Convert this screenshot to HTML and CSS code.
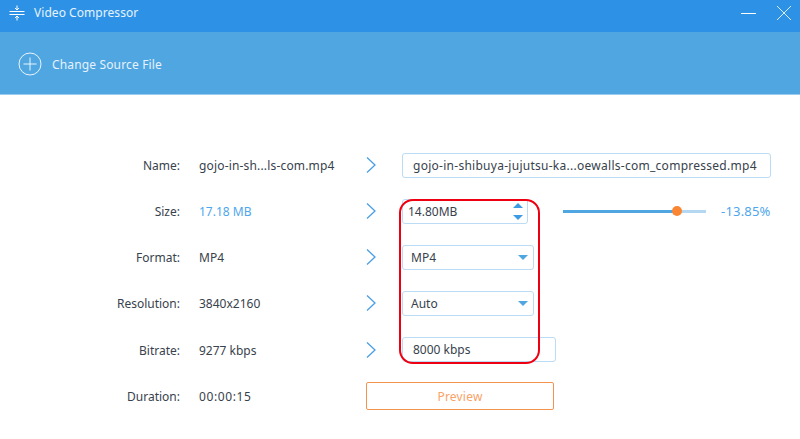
FILE: index.html
```html
<!DOCTYPE html>
<html lang="en">
<head>
  <meta charset="UTF-8">
  <meta name="viewport" content="width=device-width, initial-scale=1.0">
  <title>Video Compressor</title>
  <link rel="stylesheet" href="styles.css">
</head>
<body>
  <div class="titlebar">
    <svg class="app-icon" width="16" height="16" viewBox="0 0 16 16" fill="none" stroke="#fff" stroke-width="1">
      <path d="M0.5 6.5H15.5M0.5 9.5H15.5"/>
      <path d="M8 0.5V4.5M6 3L8 5L10 3"/>
      <path d="M8 15.5V11.5M6 13L8 11L10 13"/>
    </svg>
    <span class="title">Video Compressor</span>
    <div class="window-btns">
      <svg width="16" height="16" viewBox="0 0 16 16" stroke="#fff" stroke-width="1"><path d="M0 8.5H15"/></svg>
      <svg width="16" height="16" viewBox="0 0 16 16" stroke="#d8ecfb" stroke-width="1"><path d="M1 1L15 15M15 1L1 15"/></svg>
    </div>
  </div>

  <div class="toolbar">
    <svg width="24" height="24" viewBox="0 0 24 24" fill="none" stroke="#eaf5fd" stroke-width="1">
      <circle cx="12" cy="12" r="11"/>
      <path d="M12 5.5V18.5M5.5 12H18.5"/>
    </svg>
    <span class="change-source">Change Source File</span>
  </div>

  <div class="main">
    <div class="row">
      <div class="label">Name:</div>
      <div class="value value-name">gojo-in-sh...ls-com.mp4</div>
      <svg class="chevron" width="10" height="16" viewBox="0 0 10 16" fill="none"><path d="M1 0.5L9 8L1 15.5"/></svg>
      <div class="field field-name">gojo-in-shibuya-jujutsu-ka...oewalls-com_compressed.mp4</div>
    </div>
    <div class="row">
      <div class="label">Size:</div>
      <div class="value value-blue">17.18 MB</div>
      <svg class="chevron" width="10" height="16" viewBox="0 0 10 16" fill="none"><path d="M1 0.5L9 8L1 15.5"/></svg>
      <div class="field field-size">
        <span>14.80MB</span>
        <div class="spinner">
          <span class="arrow-up"></span>
          <span class="arrow-down"></span>
        </div>
      </div>
      <div class="slider">
        <div class="slider-fill"></div>
        <div class="slider-thumb"></div>
      </div>
      <div class="percent">-13.85%</div>
    </div>
    <div class="row">
      <div class="label">Format:</div>
      <div class="value">MP4</div>
      <svg class="chevron" width="10" height="16" viewBox="0 0 10 16" fill="none"><path d="M1 0.5L9 8L1 15.5"/></svg>
      <div class="field field-select">
        <span>MP4</span>
        <span class="arrow-down"></span>
      </div>
    </div>
    <div class="row">
      <div class="label">Resolution:</div>
      <div class="value">3840x2160</div>
      <svg class="chevron" width="10" height="16" viewBox="0 0 10 16" fill="none"><path d="M1 0.5L9 8L1 15.5"/></svg>
      <div class="field field-select">
        <span>Auto</span>
        <span class="arrow-down"></span>
      </div>
    </div>
    <div class="row row-low">
      <div class="label">Bitrate:</div>
      <div class="value">9277 kbps</div>
      <svg class="chevron" width="10" height="16" viewBox="0 0 10 16" fill="none"><path d="M1 0.5L9 8L1 15.5"/></svg>
      <div class="field field-bitrate">8000 kbps</div>
    </div>
    <div class="row">
      <div class="label">Duration:</div>
      <div class="value value-time">00:00:15</div>
      <button class="preview">Preview</button>
    </div>

    <div class="highlight"></div>
  </div>
</body>
</html>
```

FILE: styles.css
```css
body {
  margin: 0;
  height: 439px;
  overflow: hidden;
  background-color: #fff;
  font-family: "Noto Sans", sans-serif;
  font-size: 12px;
  color: #38424c;
}

.titlebar {
  display: flex;
  align-items: center;
  box-sizing: border-box;
  height: 32px;
  padding: 0 8px 7px 9px;
  background-color: #2d92e6;
}

.title {
  margin-left: 9px;
  font-size: 12px;
  letter-spacing: 0.05px;
  color: #e6f2fc;
}

.window-btns {
  display: flex;
  gap: 19px;
  margin-left: auto;
}

.toolbar {
  display: flex;
  align-items: center;
  box-sizing: border-box;
  height: 63px;
  padding-top: 2px;
  padding-left: 18px;
  background-color: #4fa6e1;
  border-bottom: 1px solid #9ccbee;
}

.change-source {
  margin-left: 10px;
  font-size: 12px;
  letter-spacing: 0.15px;
  color: #e6f2fc;
}

.main {
  position: relative;
  padding-top: 47px;
}

.row {
  display: flex;
  align-items: center;
  height: 46px;
}

.row-low {
  margin-top: 1px;
}

.label {
  width: 180px;
  text-align: right;
}

.value {
  width: 167px;
  margin-left: 19px;
}

.value-name {
  letter-spacing: 0.17px;
}

.value-time {
  letter-spacing: 0.6px;
}

.value-blue {
  color: #4ea6ec;
}

.chevron {
  margin-top: -1px;
  stroke: #4a9fe4;
  stroke-width: 1.3;
}

.field {
  display: flex;
  align-items: center;
  box-sizing: border-box;
  height: 25px;
  margin-left: 26px;
  background-color: #fff;
  border: 1px solid #bcdcf5;
  border-radius: 3px;
}

.field-name {
  width: 369px;
  padding-left: 10px;
  letter-spacing: 0.27px;
}

.field-size {
  justify-content: space-between;
  width: 126px;
  padding-left: 5px;
  padding-right: 4px;
}

.field-select {
  justify-content: space-between;
  width: 132px;
  padding-left: 8px;
  padding-right: 5px;
}

.field-bitrate {
  width: 154px;
  margin-bottom: 1px;
  padding-left: 10px;
}

.spinner {
  display: flex;
  flex-direction: column;
  gap: 7px;
}

.arrow-up,
.arrow-down {
  display: block;
  width: 0;
  height: 0;
  border-left: 5px solid transparent;
  border-right: 5px solid transparent;
}

.arrow-up {
  border-bottom: 5px solid #3d9be3;
}

.arrow-down {
  border-top: 5px solid #3d9be3;
}

.field-select .arrow-down {
  border-top-color: #4fa6e1;
}

.slider {
  position: relative;
  width: 143px;
  height: 3px;
  margin-left: 35px;
  background-color: #b5d8f2;
}

.slider-fill {
  width: 114px;
  height: 3px;
  background-color: #4fa6e1;
}

.slider-thumb {
  position: absolute;
  top: -4px;
  left: 109px;
  width: 10px;
  height: 10px;
  border-radius: 50%;
  background-color: #fa8633;
}

.percent {
  margin-left: 15px;
  font-size: 13px;
  letter-spacing: 0.2px;
  color: #4ea6ec;
}

.preview {
  box-sizing: border-box;
  width: 188px;
  height: 28px;
  margin-left: 0;
  padding: 0;
  background-color: #fff;
  border: 1px solid #f59450;
  border-radius: 2px;
  font-family: inherit;
  font-size: 12px;
  letter-spacing: 0.2px;
  color: #f9a268;
}

.highlight {
  position: absolute;
  top: 104px;
  left: 399px;
  box-sizing: border-box;
  width: 141px;
  height: 165px;
  border: 2px solid #ee0011;
  border-radius: 14px;
}
```
